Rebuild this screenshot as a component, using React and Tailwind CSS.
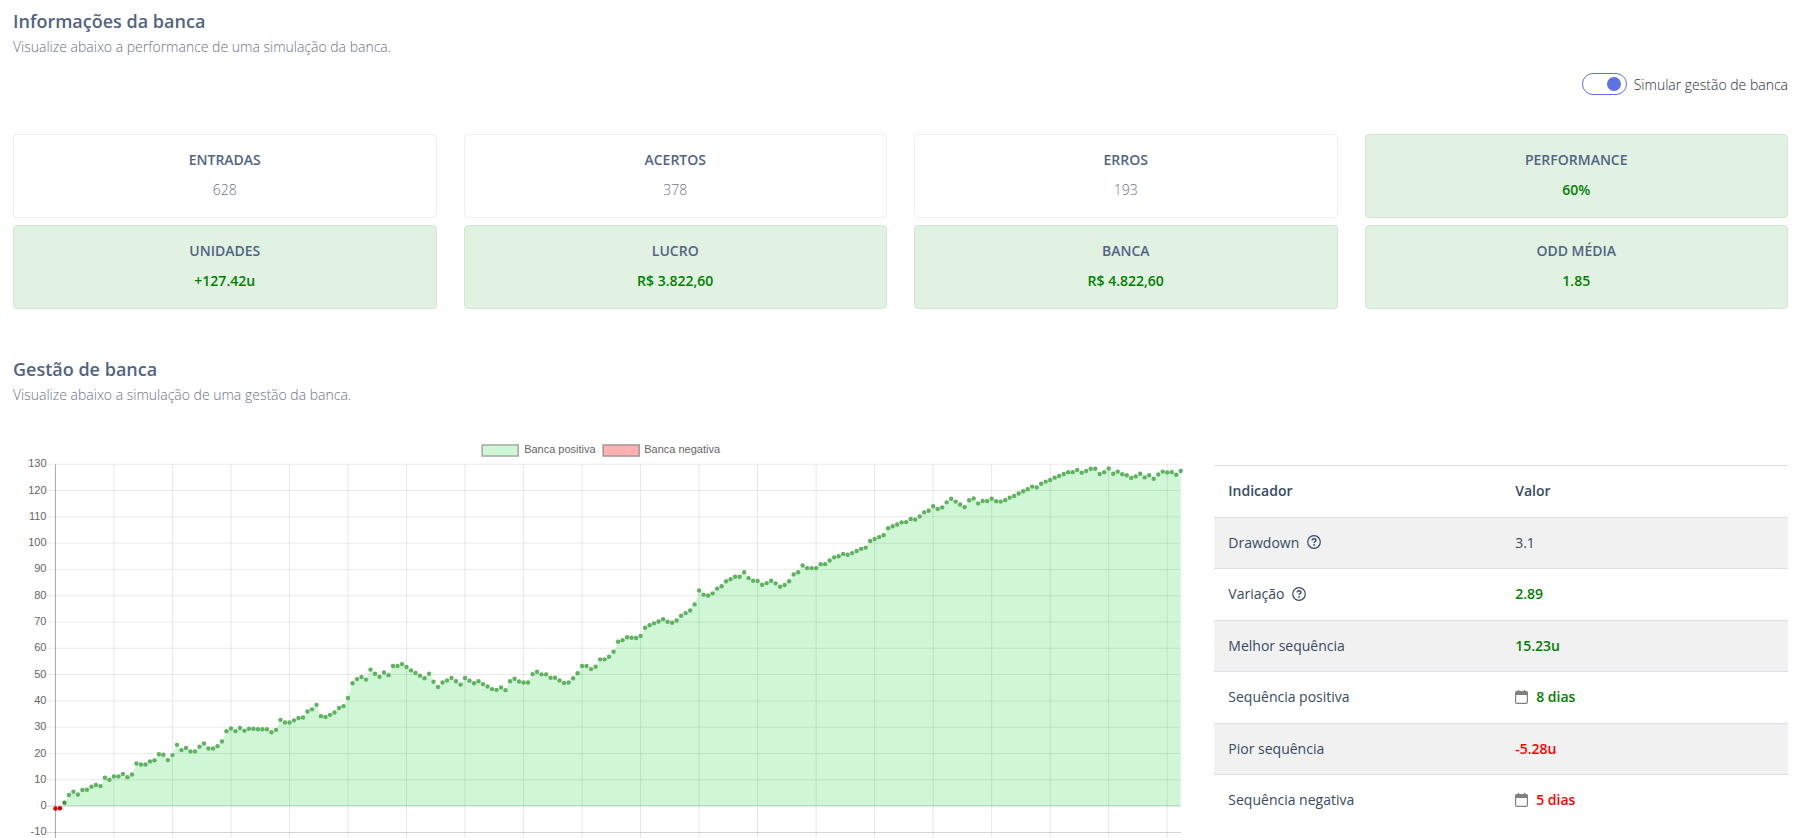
import React, { useState } from 'react';

const POINTS = [
  -0.9, -0.8, 1.3, 4.2, 5.5, 4.4, 6.1, 6.2, 7.4, 8, 7.6, 10.8, 10,
  11.3, 11.3, 12.2, 11, 12, 16.2, 15.8, 15.8, 17, 17.4, 19.7, 19.5, 17.5,
  19.4, 23.3, 21.3, 22.1, 20.8, 20.8, 22.6, 23.8, 21.9, 21.9, 22.8, 24.6, 28.5,
  29.5, 28.5, 29.7, 28.7, 29.4, 29.4, 29.2, 29.2, 29.2, 28.1, 29, 32.8, 31.8,
  31.8, 32.6, 33.5, 33.7, 36, 36.8, 38.5, 34.2, 33.9, 34.7, 35.6, 37.3, 38,
  41.1, 46.7, 48.3, 49.1, 48.1, 51.9, 50.3, 49.2, 50.8, 49.8, 53.3, 53.3, 54,
  52.9, 51.6, 50.6, 49.6, 48.6, 50.3, 47.3, 45.3, 47, 47.8, 48.7, 47.5, 46.2,
  48.7, 47.7, 46.7, 47.5, 46.4, 45.5, 44.5, 44.2, 45.1, 44.1, 47.5, 48.4, 47.4,
  47, 47, 50.2, 51.1, 50.1, 50.1, 48.8, 48.8, 47.8, 46.8, 47, 48.6, 50.5,
  53.3, 53.3, 52.1, 53, 55.8, 55.8, 56.8, 58.7, 62.5, 63.1, 64.2, 64, 63.9,
  64.7, 67.8, 68.8, 69.5, 70.2, 71.1, 70.1, 69.7, 70.6, 72.4, 73.4, 74.4, 76.7,
  82, 80.4, 80.1, 80.9, 82.7, 83.6, 85.5, 86.3, 87.2, 87.2, 88.9, 86.7, 85.7,
  85.6, 84.2, 84.8, 85.7, 84.7, 83.4, 84.1, 85.5, 88.1, 88.9, 91.5, 90.5, 90.5,
  90.5, 92, 92, 93.4, 94.6, 95, 95.9, 95.6, 96.2, 97, 97.8, 98.3, 100.8,
  101.6, 102.3, 103, 105.7, 106.4, 107.1, 107.9, 108, 109.2, 109, 110.1, 111.7, 112.3,
  114, 113, 113.6, 115.5, 116.9, 115.8, 114.7, 113.7, 116.3, 117, 115.1, 116, 116,
  116.9, 115.9, 115.8, 116.4, 117.3, 117.9, 118.9, 119.7, 120.5, 121.5, 121.2, 122.6, 123.4,
  124, 124.9, 125.5, 126.3, 127, 127, 127.8, 126.8, 127.4, 128.3, 128.3, 126.3, 127,
  128.4, 126.4, 127.2, 126.2, 125.8, 124.8, 125.4, 126.4, 125, 125.8, 124.5, 126.1, 127.2,
  126.9, 127, 126, 127.4,
];

const X0 = 42.4;
const STEP = 4.5;
const Y0 = 366;
const UNIT = 2.629;

const px = (i) => X0 + i * STEP;
const py = (v) => Y0 - v * UNIT;

const TICKS = [130, 120, 110, 100, 90, 80, 70, 60, 50, 40, 30, 20, 10, 0, -10];

const CARDS = [
  { title: 'Entradas', value: '628' },
  { title: 'Acertos', value: '378' },
  { title: 'Erros', value: '193' },
  { title: 'Performance', value: '60%', positive: true },
  { title: 'Unidades', value: '+127.42u', positive: true },
  { title: 'Lucro', value: 'R$ 3.822,60', positive: true },
  { title: 'Banca', value: 'R$ 4.822,60', positive: true },
  { title: 'Odd média', value: '1.85', positive: true },
];

const ROWS = [
  { label: 'Drawdown', help: true, value: '3.1' },
  { label: 'Variação', help: true, value: '2.89', color: 'font-semibold text-[#008000]' },
  { label: 'Melhor sequência', value: '15.23u', color: 'font-semibold text-[#008000]' },
  { label: 'Sequência positiva', value: '8 dias', calendar: true, color: 'font-semibold text-[#008000]' },
  { label: 'Pior sequência', value: '-5.28u', color: 'font-semibold text-[#ff0000]' },
  { label: 'Sequência negativa', value: '5 dias', calendar: true, color: 'font-semibold text-[#ff0000]' },
];

const HelpIcon = () => (
  <svg viewBox="0 0 14 14" className="size-3.5" fill="none" stroke="currentColor">
    <circle cx="7" cy="7" r="6.3" strokeWidth="1.2" />
    <path d="M5.1 5.6c0-1.1.8-1.8 1.9-1.8s1.9.7 1.9 1.7c0 1.2-1.8 1.3-1.8 2.4" strokeWidth="1.4" />
    <circle cx="7.1" cy="9.9" r="0.9" fill="currentColor" stroke="none" />
  </svg>
);

const CalendarIcon = () => (
  <svg viewBox="0 0 13 14" className="h-3.5 w-[13px] text-[#808080]" fill="none">
    <rect x="0.6" y="1.9" width="11.8" height="11.4" rx="1.4" stroke="currentColor" strokeWidth="1.2" />
    <path d="M1.4 1.3h10.2a1.4 1.4 0 0 1 1.4 1.4V5H0V2.7a1.4 1.4 0 0 1 1.4-1.4z" fill="currentColor" />
    <path d="M3.5 0v2M9.5 0v2" stroke="currentColor" strokeWidth="1.4" />
  </svg>
);

const SectionTitle = ({ title, description }) => (
  <div>
    <h2 className="text-[18px] leading-6 font-semibold text-[#526484]">{title}</h2>
    <p className="mt-0.5 text-[14px] leading-6 font-light text-[#6e7187]">{description}</p>
  </div>
);

const StatCard = ({ title, value, positive }) => (
  <div
    className={`rounded border pt-[13px] pb-[15px] text-center text-[14px] leading-6 ${
      positive ? 'border-[#d3e6d4] bg-[#e1f2e3]' : 'border-[#eeeff1] bg-white'
    }`}
  >
    <h3 className="font-semibold text-[#526484] uppercase">{title}</h3>
    <p className={`mt-1.5 ${positive ? 'font-semibold text-[#008000]' : 'font-light text-[#6e7187]'}`}>{value}</p>
  </div>
);

const BankChart = () => {
  const last = POINTS.length - 1;
  const line = POINTS.slice(2).map((v, i) => `${px(i + 2)},${py(v)}`).join(' ');

  return (
    <svg viewBox="0 0 1174 398" className="block w-full" role="img" aria-label="Gestão de banca">
      <g className="font-['Liberation_Sans',sans-serif] text-[11px]" fill="#666">
        <rect x="469" y="5" width="36" height="11" fill="#cef7d5" stroke="#a5aea7" strokeWidth="1.6" />
        <text x="511" y="13">Banca positiva</text>
        <rect x="590" y="5" width="36" height="11" fill="#ffb0b0" stroke="#a89a9a" strokeWidth="1.6" />
        <text x="631" y="13">Banca negativa</text>
      </g>

      <polygon points={`${px(2)},${Y0} ${line} ${px(last)},${Y0}`} fill="#cff7d6" />

      {TICKS.map((t) => (
        <g key={t}>
          <line x1="33.5" x2={px(last)} y1={py(t)} y2={py(t)} stroke="#000" strokeOpacity={t === 0 ? 0.2 : t === -10 ? 0.16 : 0.08} />
          <text x="33.5" y={py(t) + 3} textAnchor="end" fill="#666" className="font-['Liberation_Sans',sans-serif] text-[11px]">
            {t}
          </text>
        </g>
      ))}
      {Array.from({ length: 20 }, (_, i) => (
        <line key={i} x1={px(i * 13)} x2={px(i * 13)} y1={py(130)} y2="398" stroke="#000" strokeOpacity={i === 0 ? 0.35 : 0.09} />
      ))}

      {POINTS.map((v, i) => (
        <circle key={i} cx={px(i)} cy={py(v)} r="2.2" fill={v < 0 ? '#d40000' : i === 2 ? '#4c8f3c' : '#5fb25f'} />
      ))}
    </svg>
  );
};

const IndicatorTable = () => (
  <table className="w-full table-fixed border-collapse text-left text-[14px] text-[#364a63]">
    <thead>
      <tr className="h-[52px] border-t border-[#dbdfea]">
        <th className="px-3.5 pb-0.5 font-semibold">Indicador</th>
        <th className="px-3.5 pb-0.5 font-semibold">Valor</th>
      </tr>
    </thead>
    <tbody>
      {ROWS.map((row) => (
        <tr key={row.label} className="border-t border-[#dbdfea] odd:h-[51px] odd:bg-[#f1f1f1] even:h-[52px]">
          <td className="px-3.5 pb-0.5">
            <div className="flex items-center gap-2">
              {row.label}
              {row.help && <HelpIcon />}
            </div>
          </td>
          <td className="px-3.5 pb-0.5">
            <div className={`flex items-center gap-2 ${row.color || ''}`}>
              {row.calendar && <CalendarIcon />}
              {row.value}
            </div>
          </td>
        </tr>
      ))}
    </tbody>
  </table>
);

const App = () => {
  const [simulate, setSimulate] = useState(true);

  return (
    <main className="bg-white pt-[9px] pr-[17px] pl-[13px] font-['Open_Sans',sans-serif]">
      <SectionTitle title="Informações da banca" description="Visualize abaixo a performance de uma simulação da banca." />

      <div className="mt-[13px] flex justify-end">
        <label className="flex h-6 items-center gap-[7px] text-[14px] font-light text-[#1f2b3a]">
          <input
            type="checkbox"
            checked={simulate}
            onChange={(e) => setSimulate(e.target.checked)}
            className="flex h-[22px] w-[45px] appearance-none items-center rounded-full border border-[#5f73e4] px-[5px] before:size-3.5 before:rounded-full before:bg-[#5f73e4] checked:justify-end"
          />
          Simular gestão de banca
        </label>
      </div>

      <div className="mt-[38px] grid grid-cols-4 gap-x-[27px] gap-y-[7px]">
        {CARDS.map((card) => (
          <StatCard key={card.title} {...card} />
        ))}
      </div>

      <div className="mt-[48px]">
        <SectionTitle title="Gestão de banca" description="Visualize abaixo a simulação de uma gestão da banca." />
      </div>

      <div className="mt-[33px] grid grid-cols-3 gap-x-[27px]">
        <div className="col-span-2">
          <BankChart />
        </div>
        <div className="pt-[25px]">
          <IndicatorTable />
        </div>
      </div>
    </main>
  );
};

export default App;
